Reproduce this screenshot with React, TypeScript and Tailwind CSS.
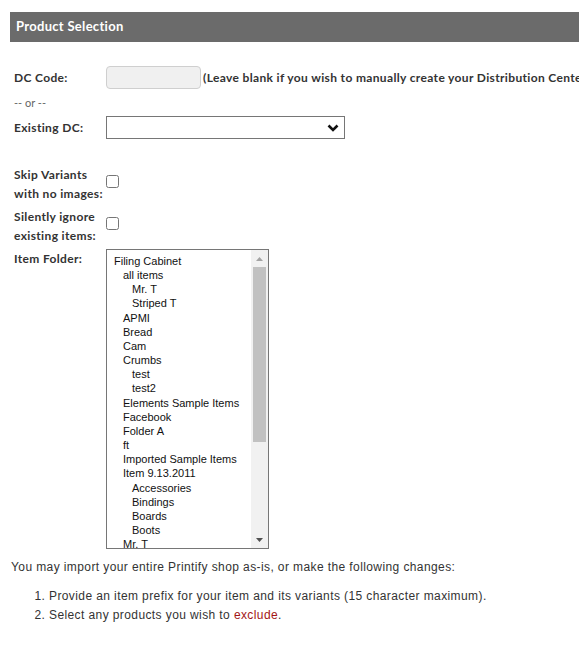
import React from "react";

const folders: [string, number][] = [
  ["Filing Cabinet", 0],
  ["all items", 1],
  ["Mr. T", 2],
  ["Striped T", 2],
  ["APMI", 1],
  ["Bread", 1],
  ["Cam", 1],
  ["Crumbs", 1],
  ["test", 2],
  ["test2", 2],
  ["Elements Sample Items", 1],
  ["Facebook", 1],
  ["Folder A", 1],
  ["ft", 1],
  ["Imported Sample Items", 1],
  ["Item 9.13.2011", 1],
  ["Accessories", 2],
  ["Bindings", 2],
  ["Boards", 2],
  ["Boots", 2],
  ["Mr. T", 1],
  ["Striped T", 2],
  ["Shirts", 2],
];

const indentCls = ["pl-0", "pl-[9px]", "pl-[18px]"];

export default function App() {
  return (
    <div className="w-[579px] h-[647px] overflow-hidden bg-white text-[#333]">
      <div className="pt-[12px] pl-[10px]">
        <div className="h-[30px] bg-[#6b6b6b] flex items-center pl-[6px] text-white font-bold text-[13px] tracking-[0.3px] font-['Lato',sans-serif]">
          Product Selection
        </div>
      </div>

      <div className="pl-[14px] font-['Lato',sans-serif] text-[12px] font-bold tracking-[0.35px] leading-[19px]">
        <div className="mt-[24px] flex items-center">
          <div className="w-[92px] shrink-0">DC Code:</div>
          <input
            type="text"
            className="w-[95px] h-[23px] rounded-[4px] border border-[#cfcfcf] bg-[#f0f0f0] shrink-0"
          />
          <div className="ml-[2px] whitespace-nowrap">
            (Leave blank if you wish to manually create your Distribution Center)
          </div>
        </div>

        <div className="mt-[4px] text-[11px] font-normal text-[#666] tracking-normal">-- or --</div>

        <div className="mt-[4px] flex items-center">
          <div className="w-[92px] shrink-0">Existing DC:</div>
          <div className="w-[239px] h-[23px] border border-[#767676] flex items-center justify-end pr-[5px]">
            <svg width="12" height="8" viewBox="0 0 12 8">
              <path d="M1.5 1.5 L6 6 L10.5 1.5" fill="none" stroke="#111" strokeWidth="2.6" />
            </svg>
          </div>
        </div>

        <div className="mt-[26px] flex items-start">
          <div className="w-[92px] shrink-0">
            Skip Variants
            <br />
            with no images:
          </div>
          <input type="checkbox" className="w-[13px] h-[13px] m-0 mt-[10px]" />
        </div>

        <div className="mt-[4px] flex items-start">
          <div className="w-[92px] shrink-0">
            Silently ignore
            <br />
            existing items:
          </div>
          <input type="checkbox" className="w-[13px] h-[13px] m-0 mt-[10px]" />
        </div>

        <div className="mt-[4px] flex items-start">
          <div className="w-[92px] shrink-0">Item Folder:</div>
          <div className="w-[163px] h-[300px] border border-[#767676] flex overflow-hidden">
            <div className="flex-1 overflow-hidden pl-[7px] pt-[4px] font-['Liberation_Sans',Arial,sans-serif] font-normal text-[11px] leading-[14.16px] tracking-normal text-[#111]">
              {folders.map(([name, lvl], i) => (
                <div key={i} className={`whitespace-nowrap ${indentCls[lvl]}`}>
                  {name}
                </div>
              ))}
            </div>
            <div className="w-[17px] bg-[#f1f1f1] flex flex-col shrink-0">
              <div className="h-[17px] flex items-center justify-center">
                <svg width="7" height="4" viewBox="0 0 7 4">
                  <path d="M0 4 L3.5 0 L7 4 Z" fill="#a3a3a3" />
                </svg>
              </div>
              <div className="flex-1 flex flex-col px-[2px]">
                <div className="h-[175px] bg-[#c1c1c1]" />
              </div>
              <div className="h-[17px] flex items-center justify-center">
                <svg width="7" height="4" viewBox="0 0 7 4">
                  <path d="M0 0 L7 0 L3.5 4 Z" fill="#505050" />
                </svg>
              </div>
            </div>
          </div>
        </div>
      </div>

      <div className="mt-[11px] pl-[11px] font-['Liberation_Sans',Arial,sans-serif] text-[12px] tracking-[0.4px] leading-[15px] text-[#333]">
        You may import your entire Printify shop as-is, or make the following changes:
        <ol className="mt-[12px] list-decimal pl-[38px] leading-[19px]">
          <li>Provide an item prefix for your item and its variants (15 character maximum).</li>
          <li>
            Select any products you wish to <span className="text-[#a31515]">exclude</span>.
          </li>
        </ol>
      </div>
    </div>
  );
}
